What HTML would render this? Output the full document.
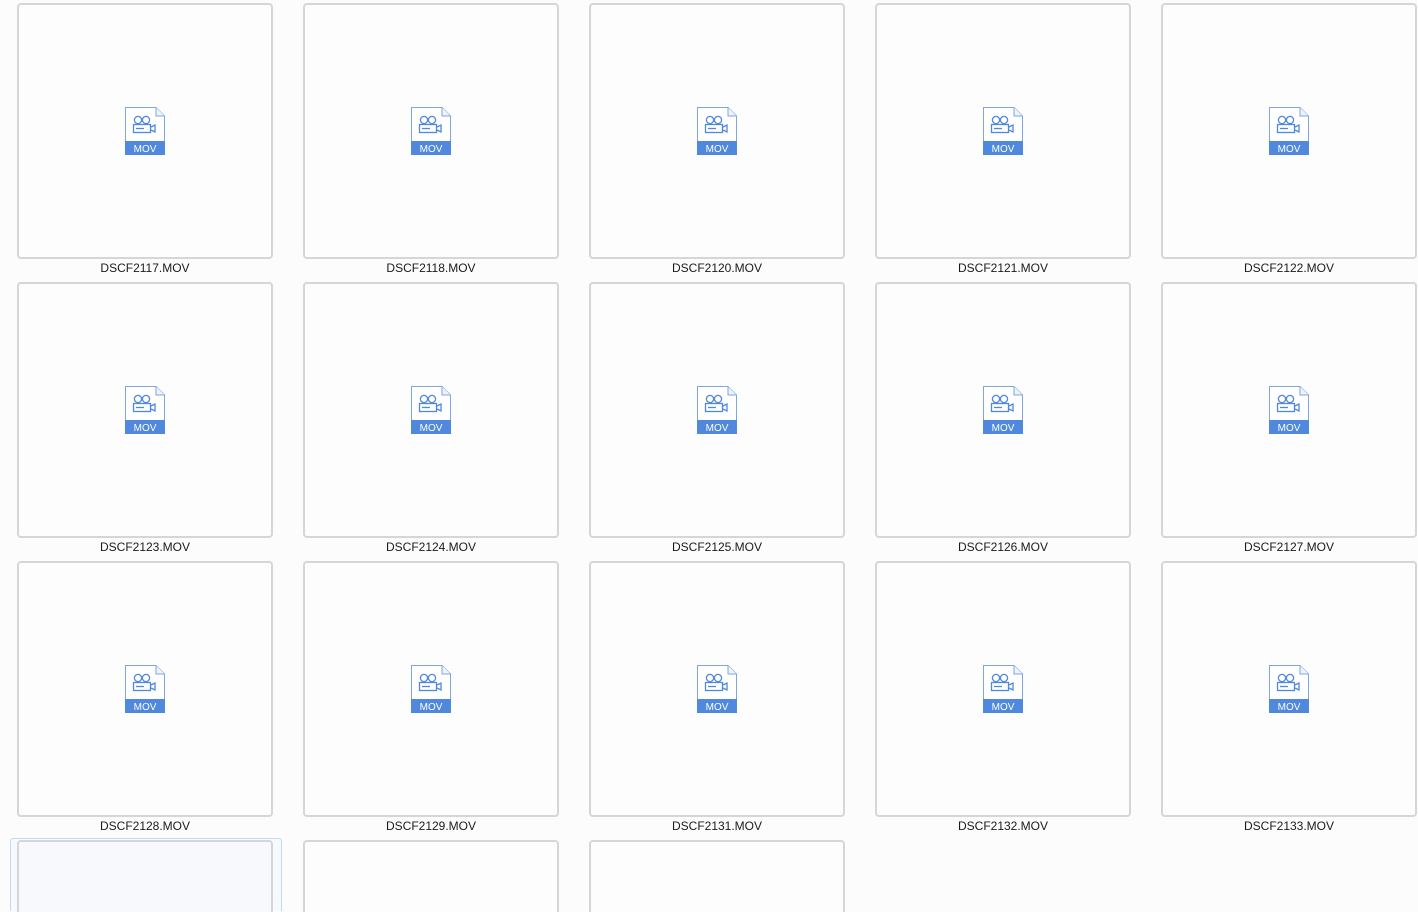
<!DOCTYPE html>
<html><head><meta charset="utf-8"><style>
html,body{margin:0;padding:0;width:1418px;height:912px;overflow:hidden;background:#fcfcfc;font-family:"Liberation Sans",sans-serif}
#w{position:relative;width:1418px;height:912px;overflow:hidden}
.t{position:absolute;width:252px;height:252px;border:2px solid #d6d6d6;border-radius:4px;background:#fdfdfd}
.l{position:absolute;width:256px;text-align:center;font-size:12px;color:#1a1a1a}
.i{position:absolute;left:105px;top:101px}
.sel{position:absolute;left:10px;top:838px;width:270px;height:72px;border:1px solid #c5d9ee;border-bottom:none;border-radius:3px 3px 0 0;background:#f6f9fd}
</style></head><body><div id="w">
<div class="sel"></div>
<script>
var names=[["DSCF2117","DSCF2118","DSCF2120","DSCF2121","DSCF2122"],["DSCF2123","DSCF2124","DSCF2125","DSCF2126","DSCF2127"],["DSCF2128","DSCF2129","DSCF2131","DSCF2132","DSCF2133"],["","",""]];
var icon='<svg class="i" width="42" height="50" viewBox="0 0 42 50"><path d="M1.5 1.5H32L40.5 10V48.5H1.5Z" fill="#fff" stroke="#7fa6df" stroke-width="1"/><path d="M32 1.5V10H40.5" fill="#eef3fb" stroke="#7fa6df" stroke-width="1"/><circle cx="14" cy="14" r="3.6" fill="none" stroke="#4f88dc" stroke-width="1.3"/><circle cx="22" cy="14" r="3.6" fill="none" stroke="#4f88dc" stroke-width="1.3"/><rect x="9.5" y="18.5" width="17" height="8" fill="none" stroke="#4f88dc" stroke-width="1.3"/><line x1="12" y1="22.5" x2="20" y2="22.5" stroke="#4f88dc" stroke-width="1.3"/><path d="M27 21L31 19V26L27 24" fill="none" stroke="#4f88dc" stroke-width="1.3"/><rect x="1" y="35" width="40" height="14" fill="#4f88dc"/><text x="21" y="46" font-size="10" fill="#fff" text-anchor="middle" font-family="Liberation Sans,sans-serif">MOV</text></svg>';
var h='';
for(var r=0;r<4;r++)for(var c=0;c<names[r].length;c++){
 var x=17+c*286,y=3+r*279;
 h+='<div class="t" style="left:'+x+'px;top:'+y+'px;'+(r==3&&c==0?'background:#f7f9fc':'')+'">'+(r<3?icon:'')+'</div>';
 if(r<3)h+='<div class="l" style="left:'+x+'px;top:'+(y+258)+'px">'+names[r][c]+'.MOV</div>';
}
document.write(h);
</script>
</div></body></html>
